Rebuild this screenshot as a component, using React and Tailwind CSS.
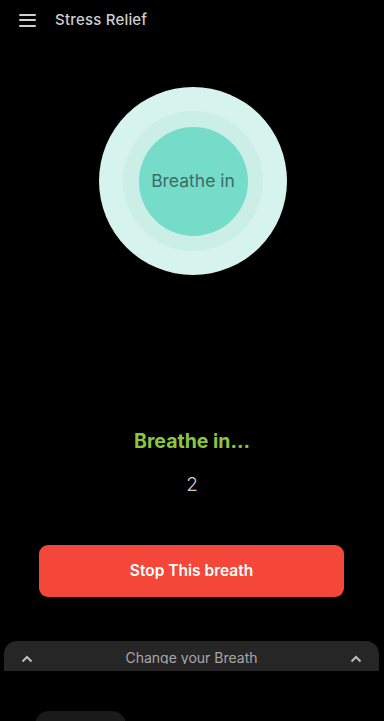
import React from "react";

// Breathing screen
export default function App() {
  const font = { fontFamily: "Inter, 'Noto Sans', sans-serif" };

  return (
    <div className="w-[384px] h-[721px] bg-black overflow-hidden" style={font}>
      {/* Header */}
      <div className="h-[40px] flex items-center pl-[19px]">
        <div className="flex flex-col gap-[3.5px] w-[17px]">
          <span className="h-[2px] bg-[#d0d0d0] rounded" />
          <span className="h-[2px] bg-[#d0d0d0] rounded" />
          <span className="h-[2px] bg-[#d0d0d0] rounded" />
        </div>
        <span className="ml-[19px] text-[15px] text-[#cfcfcf] font-medium tracking-[0.2px]">Stress Relief</span>
      </div>

      {/* Breathing circles */}
      <div className="flex justify-center mt-[47px] pl-[2px]">
        <div className="w-[188px] h-[188px] rounded-full bg-[#d6f4ed] flex items-center justify-center">
          <div className="w-[140px] h-[140px] rounded-full bg-[#cbeee6] flex items-center justify-center">
            <div className="w-[109px] h-[109px] rounded-full bg-[#74dcc8] flex items-center justify-center">
              <span className="text-[17.5px] text-[#3d6b68]">Breathe in</span>
            </div>
          </div>
        </div>
      </div>

      {/* Status */}
      <div className="mt-[153px] flex flex-col items-center">
        <span className="text-[19.5px] font-bold text-[#8cc63f] leading-[26px]">Breathe in...</span>
        <span className="mt-[19px] text-[19px] text-[#cfcfcf] font-light leading-[24px]">2</span>
      </div>

      {/* Stop button */}
      <div className="mt-[48px] pl-[39px] pr-[40px]">
        <button className="w-full h-[52px] rounded-[9px] bg-[#f4473a] text-white text-[15.5px] font-semibold">
          Stop This breath
        </button>
      </div>

      {/* Bottom sheet */}
      <div className="mt-[44px] ml-[4px] mr-[5px] h-[30px] rounded-t-[13px] bg-[#262626] flex items-start justify-between px-[17px] pt-[8px]">
        <svg width="12" height="8" viewBox="0 0 12 8" className="mt-[6px]">
          <path d="M1.5 6.5 L6 2 L10.5 6.5" stroke="#bdbdbd" strokeWidth="2" fill="none" />
        </svg>
        <span className="block h-[15px] overflow-hidden text-[14px] text-[#a8a8a8] leading-[18px]">Change your Breath</span>
        <svg width="12" height="8" viewBox="0 0 12 8" className="mt-[6px]">
          <path d="M1.5 6.5 L6 2 L10.5 6.5" stroke="#bdbdbd" strokeWidth="2" fill="none" />
        </svg>
      </div>

      <div className="mt-[40px] ml-[35px] w-[91px] h-[20px] rounded-t-[14px] bg-[#1a1a1a]" />
    </div>
  );
}
